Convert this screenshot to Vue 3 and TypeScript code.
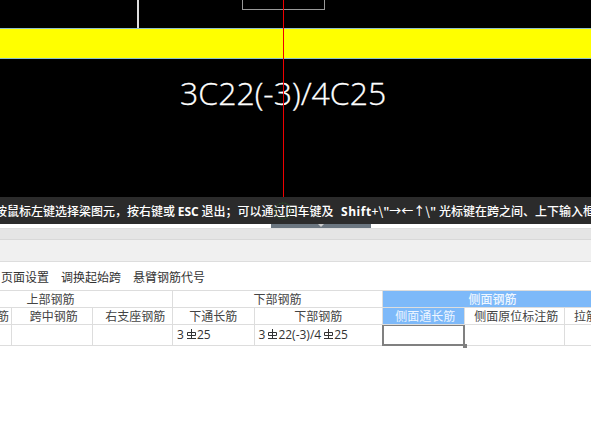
<script setup lang="ts">
interface Cell { text: string; cls?: string; span?: number }
const top: Cell[] = [
  { text: '上部钢筋', span: 3, cls: 'c nudge1' },
  { text: '下部钢筋', span: 2, cls: 'c' },
  { text: '侧面钢筋', span: 3, cls: 'c blue' },
]
const sub: Cell[] = [
  { text: '筋', cls: 'r' },
  { text: '跨中钢筋', cls: 'c nudge2' },
  { text: '右支座钢筋', cls: 'c nudge3' },
  { text: '下通长筋', cls: 'c' },
  { text: '下部钢筋', cls: 'c' },
  { text: '侧面通长筋', cls: 'c blue nudge2' },
  { text: '侧面原位标注筋', cls: 'c nudge2' },
  { text: '拉筋', cls: 'l' },
]
const tools = ['页面设置', '调换起始跨', '悬臂钢筋代号']
</script>

<template>
  <div class="page">
    <div class="canvas">
      <div class="top-space">
        <div class="post"></div>
        <div class="box"></div>
      </div>
      <div class="beam"></div>
      <div class="label">3C22(-3)/4C25</div>
      <div class="cross"></div>
    </div>
    <div class="status">
      <span class="status-text">按鼠标左键选择梁图元，按右键或 <b>ESC</b> 退出；可以通过回车键及 <b class="shift">Shift</b>+\"→←↑\" 光标键在跨之间、上下输入框</span>
      <svg class="target" width="18" height="18" viewBox="0 0 18 18"><circle cx="9" cy="9" r="8" fill="none" stroke="#2e5a2e" stroke-width="1" stroke-dasharray="2 1" /></svg>
    </div>
    <div class="strip"><div class="handle"><i></i></div></div>
    <div class="band1"></div>
    <div class="band2"></div>
    <div class="toolbar">
      <span v-for="t in tools" :key="t">{{ t }}</span>
    </div>
    <div class="table">
      <div v-for="c in top" :key="c.text" class="cell h1" :class="c.cls" :style="{ gridColumn: 'span ' + c.span }">{{ c.text }}</div>
      <div v-for="c in sub" :key="c.text" class="cell h2" :class="c.cls">{{ c.text }}</div>
      <div class="cell d"></div>
      <div class="cell d"></div>
      <div class="cell d"></div>
      <div class="cell d val">3<svg class="rebar" viewBox="0 0 9 10" width="9" height="10"><path d="M0.5 3.5 H8.5 V6.5 H0.5 Z M4.5 0 V9.5 M0 9.5 H9" fill="none" stroke="#333" stroke-width="1" /></svg>25</div>
      <div class="cell d val">3<svg class="rebar" viewBox="0 0 9 10" width="9" height="10"><path d="M0.5 3.5 H8.5 V6.5 H0.5 Z M4.5 0 V9.5 M0 9.5 H9" fill="none" stroke="#333" stroke-width="1" /></svg>22(-3)/4<svg class="rebar" viewBox="0 0 9 10" width="9" height="10"><path d="M0.5 3.5 H8.5 V6.5 H0.5 Z M4.5 0 V9.5 M0 9.5 H9" fill="none" stroke="#333" stroke-width="1" /></svg>25</div>
      <div class="cell d active"><i class="grip"></i></div>
      <div class="cell d"></div>
      <div class="cell d"></div>
    </div>
  </div>
</template>

<style>
html, body { margin: 0; background: #fff; }
</style>

<style scoped>
.page {
  width: 591px;
  height: 429px;
  overflow: hidden;
  background: #fff;
  font-family: "Noto Sans CJK SC", "Noto Sans", sans-serif;
  font-size: 12px;
  color: #333;
}
.canvas {
  position: relative;
  height: 197px;
  background: #000;
  overflow: hidden;
}
.top-space { position: relative; height: 28px; }
.post { position: absolute; left: 137px; top: 0; width: 1.5px; height: 28px; background: #ddd; }
.box { position: absolute; left: 242px; top: -2px; width: 81px; height: 10px; border: 1px solid #999; }
.beam {
  height: 29px;
  background: #ff0;
  border-top: 1px solid #8fc0c8;
  border-bottom: 1px solid #8fc0c8;
}
.label {
  margin-top: 11px;
  margin-left: 180px;
  font-family: "Open Sans", sans-serif;
  font-size: 32px;
  font-weight: 300;
  -webkit-text-stroke: 0.3px #fff;
  line-height: 46px;
  color: #fff;
  white-space: nowrap;
}
.cross { position: absolute; left: 283px; top: 0; width: 1px; height: 197px; background: #e00; }
.status {
  position: relative;
  height: 27px;
  background: #2b2b2b;
  color: #fff;
  overflow: hidden;
  white-space: nowrap;
  line-height: 27px;
  font-weight: 500;
}
.status-text { display: block; margin-left: -5px; }
.status b { font-family: "Open Sans", sans-serif; font-weight: 700; }
.status b.shift { margin-left: 5px; letter-spacing: 0.5px; }
.target { position: absolute; left: 274px; top: 5px; }
.strip { height: 4px; }
.handle { position: relative; margin-left: 271px; width: 100px; height: 4px; background: #6b7680; }
.handle i {
  position: absolute; left: 47px; top: 0;
  border-left: 3px solid transparent;
  border-right: 3px solid transparent;
  border-top: 3px solid #ccc;
}
.band1 { height: 10px; background: #e5e5e5; border-top: 1px solid #ddd; border-bottom: 1px solid #d8d8d8; }
.band2 { height: 21px; background: #f0f0f0; border-bottom: 1px solid #ddd; }
.toolbar {
  height: 28px;
  display: flex;
  align-items: center;
  gap: 12px;
  padding-left: 1px;
  color: #333;
}
.table {
  display: grid;
  width: 800px;
  margin-left: -73px;
  grid-template-columns: 85px 80.5px 80.5px 81.5px 128.5px 81.5px 100.5px 38px;
  grid-template-rows: 17px 17px 21px;
  border-top: 1px solid #ddd;
}
.cell {
  box-sizing: border-box;
  border-right: 1px solid #ddd;
  border-bottom: 1px solid #ddd;
  line-height: 16px;
  white-space: nowrap;
  overflow: hidden;
  color: #444;
}
.h1 { height: 17px; line-height: 16px; }
.h2 { height: 17px; }
.c { text-align: center; }
.nudge1 { padding-left: 2px; }
.nudge2 { padding-left: 4px; }
.nudge3 { padding-left: 6px; }
.r { text-align: right; padding-right: 2px; }
.l { padding-left: 9px; }
.blue { background: #7db9f9; color: #eef6ff; }
.h1.blue { font-weight: 500; }
.d { height: 21px; line-height: 20px; }
.val { padding-left: 4px; font-family: "Open Sans", "Noto Sans", sans-serif; font-size: 12px; color: #333; display: flex; align-items: center; }
.rebar { flex: none; margin: 0 1px 2px 3px; }
.active {
  position: relative;
  overflow: visible;
  border: 2px solid #808080;
  border-top: 1px solid #808080;
  margin-left: -1px;
}
.grip {
  position: absolute; right: -4px; bottom: -4px;
  width: 4px; height: 4px; background: #808080;
}
</style>
